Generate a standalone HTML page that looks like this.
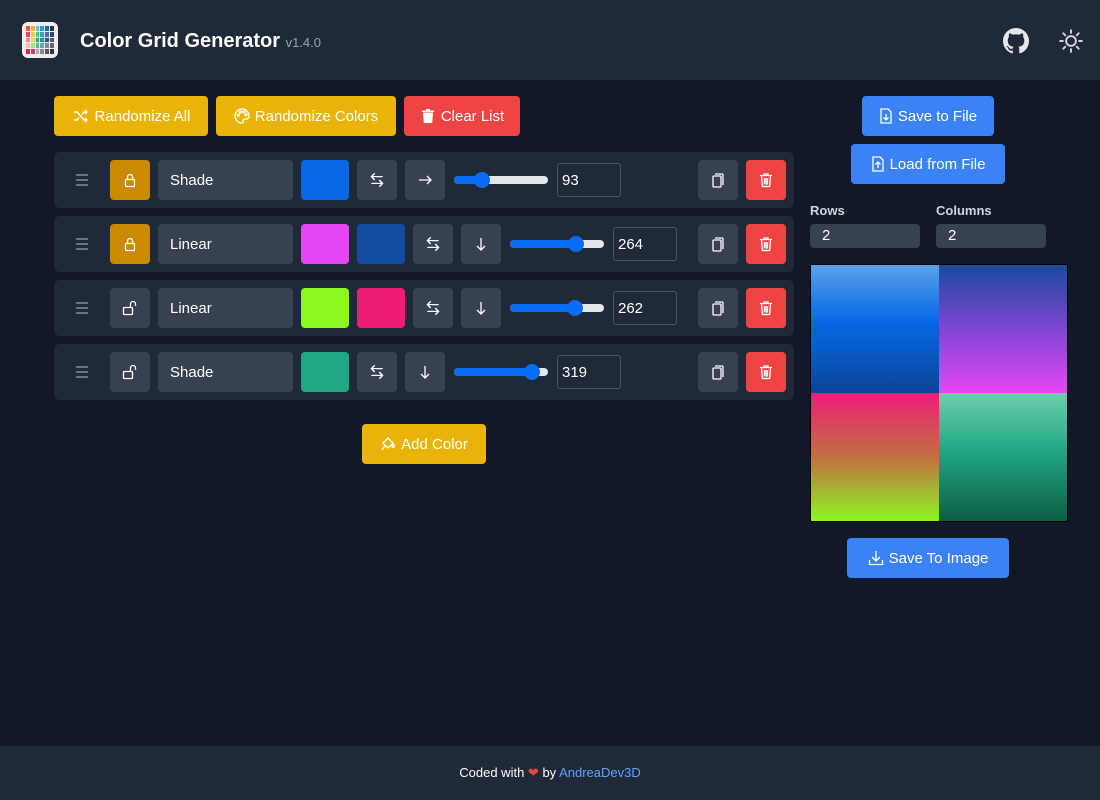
<!DOCTYPE html>
<html><head><meta charset="utf-8"><style>
*{box-sizing:border-box;margin:0;padding:0}
body{width:1100px;height:800px;background:#111827;font-family:"Liberation Sans",sans-serif;color:#fff;position:relative;overflow:hidden}
.a{position:absolute}
.hdr{left:0;top:0;width:1100px;height:80px;background:#1f2937}
.btn{position:absolute;border-radius:4px;display:flex;align-items:center;justify-content:center;font-size:15px;color:#fff;gap:5px}
.y{background:#eab308}.r{background:#ef4444}.b{background:#3b82f6}.g{background:#374151}
.row{position:absolute;left:54px;width:740px;height:56px;background:#1f2937;border-radius:6px}
.sq{position:absolute;top:8px;width:40px;height:40px;border-radius:4px;display:flex;align-items:center;justify-content:center;font-size:18px}
.txt{position:absolute;top:8px;left:104px;width:135px;height:40px;background:#374151;border-radius:4px;font-size:15px;padding-left:12px;line-height:42px}
.num{position:absolute;top:11px;width:64px;height:34px;border:1px solid #4b5563;border-radius:3px;font-size:15px;padding-left:4px;line-height:34px}
.sl{position:absolute;top:24px;width:94px;height:8px;background:#e5e7eb;border-radius:4px}
.sl i{position:absolute;left:0;top:0;height:8px;background:#0a6cf5;border-radius:4px}
.sl b{position:absolute;top:-4px;width:16px;height:16px;border-radius:50%;background:#0a6cf5}
.drag{position:absolute;left:22px;top:22px;width:12px}
.drag s{display:block;height:2px;background:#6b7280;margin-bottom:3px}
.inp{position:absolute;height:24px;background:#374151;border-radius:4px;font-size:15px;padding-left:12px;line-height:24px;width:110px}
svg{display:block}
</style></head><body>
<svg width="0" height="0" style="position:absolute"><defs>
<g id="lock" fill="none" stroke="#fff" stroke-width="1.3"><rect x="3.5" y="7.5" width="9" height="7" rx="1"/><path d="M5.5 7.5V5a2.5 2.5 0 0 1 5 0v2.5"/></g>
<g id="unlock" fill="none" stroke="#fff" stroke-width="1.3"><rect x="1.5" y="7.5" width="9" height="7" rx="1"/><path d="M8.5 7.5V4a2.5 2.5 0 0 1 5 0v2"/></g>
<g id="trash" fill="none" stroke="#fff" stroke-width="1.3"><path d="M2 3.5h12M6 3.5V2h4v1.5M3.5 3.5l.8 11h7.4l.8-11M6.5 6v6.5M9.5 6v6.5M8 6v6.5"/></g>
<g id="copy" fill="none" stroke="#fff" stroke-width="1.3"><rect x="3" y="4" width="8" height="11" rx="1"/><path d="M5 2h7a1 1 0 0 1 1 1v10"/></g>
<g id="swap" fill="none" stroke="#fff" stroke-width="1.2"><path d="M13 5H3M6 2L3 5l3 3M3 11h10M10 8l3 3-3 3"/></g>
<g id="right" fill="none" stroke="#fff" stroke-width="1.3"><path d="M2 8h12M10 4l4 4-4 4"/></g>
<g id="down" fill="none" stroke="#fff" stroke-width="1.3"><path d="M8 2v12M4 10l4 4 4-4"/></g>
</defs></svg>
<div class="a hdr"></div>
<div class="a" style="left:22px;top:22px;width:36px;height:36px;border-radius:6px;background:#eee;padding:4px;display:grid;grid-template-columns:repeat(6,1fr);gap:1px">
<i style="background:#e53"></i><i style="background:#fa3"></i><i style="background:#4cd"></i><i style="background:#39c"></i><i style="background:#26a"></i><i style="background:#235"></i>
<i style="background:#e45"></i><i style="background:#fc3"></i><i style="background:#3c9"></i><i style="background:#2ab"></i><i style="background:#37b"></i><i style="background:#346"></i>
<i style="background:#f87"></i><i style="background:#dd5"></i><i style="background:#2a6"></i><i style="background:#199"></i><i style="background:#448"></i><i style="background:#556"></i>
<i style="background:#fbb"></i><i style="background:#ad8"></i><i style="background:#5b8"></i><i style="background:#6aa"></i><i style="background:#889"></i><i style="background:#667"></i>
<i style="background:#e24"></i><i style="background:#d36"></i><i style="background:#aab"></i><i style="background:#889"></i><i style="background:#556"></i><i style="background:#334"></i>
</div>
<div class="a" style="left:80px;top:30px;font-size:20px;font-weight:bold">Color Grid Generator <span style="font-size:13px;font-weight:normal;color:#9ca3af">v1.4.0</span></div>
<svg class="a" style="left:1003px;top:28px" width="26" height="26" viewBox="0 0 16 16"><path fill="#e5e7eb" d="M8 0C3.58 0 0 3.58 0 8c0 3.54 2.29 6.53 5.47 7.590.4.07.55-.17.55-.38v-1.33c-2.230.48-2.7-1.07-2.7-1.07-.36-.92-.89-1.170-.89-1.17-.73-.5.06-.49.06-.49.8.06 1.230.83 1.230.83.72 1.22 1.870.87 2.330.66.07-.52.28-.87.51-1.07-1.780-.2-3.640-.89-3.640-3.95 0-.87.31-1.59.82-2.15-.08-.2-.36-1.020.08-2.12 0 0 .67-.21 2.200.82a7.6 7.6 0 0 1 4 0c1.530-1.040 2.200-.82 2.200-.82.44 1.100.16 1.920.08 2.120.51.56.82 1.270.82 2.150 0 3.070-1.870 3.750-3.650 3.950.29.25.54.73.54 1.480v2.200c0 .21.15.46.55.38A8 8 0 0 0 16 8c0-4.420-3.580-8-8-8z"/></svg>
<svg class="a" style="left:1058px;top:28px" width="26" height="26" viewBox="0 0 24 24" fill="none" stroke="#d1d5db" stroke-width="1.8" stroke-linecap="round"><circle cx="12" cy="12" r="4.5"/><path d="M12 2v2.5M12 19.5V22M2 12h2.5M19.5 12H22M4.9 4.9l1.8 1.8M17.3 17.3l1.8 1.8M4.9 19.1l1.8-1.8M17.3 6.7l1.8-1.8"/></svg>

<div class="btn y" style="left:54px;top:96px;width:154px;height:40px"><svg width="18" height="16" viewBox="0 0 16 16" fill="none" stroke="#fff" stroke-width="1.4"><path d="M1 4h3l7 8h3M1 12h3l2-2.3M9 6.3L11 4h3M12 2l2 2-2 2M12 10l2 2-2 2"/></svg>Randomize All</div>
<div class="btn y" style="left:216px;top:96px;width:180px;height:40px"><svg width="16" height="16" viewBox="0 0 16 16" fill="none" stroke="#fff" stroke-width="1.3"><path d="M8 1a7 7 0 1 0 0 14c1 0 1.5-.8 1-1.8-.5-1 0-2 1.2-2H12a3 3 0 0 0 3-3A7 7 0 0 0 8 1z"/><circle cx="4.5" cy="7" r="1"/><circle cx="6.5" cy="4" r="1"/><circle cx="10" cy="4" r="1"/><circle cx="12" cy="7" r="1"/></svg>Randomize Colors</div>
<div class="btn r" style="left:404px;top:96px;width:116px;height:40px"><svg width="16" height="16" viewBox="0 0 16 16" fill="#fff"><path d="M2 2.5h12v1.5H2zM6 1h4v1.5H6zM3 4.5h10l-.8 10.5H3.8z"/></svg>Clear List</div>

<div class="row" style="top:152px">
<div class="drag"><s></s><s></s><s></s></div>
<div class="sq" style="left:56px;background:#ca8a04"><svg width="16" height="16" viewBox="0 0 16 16"><use href="#lock"/></svg></div>
<div class="txt">Shade</div>
<div class="sq" style="left:247px;width:48px;background:#0769e6"></div>
<div class="sq g" style="left:303px"><svg width="18" height="18" viewBox="0 0 16 16"><use href="#swap"/></svg></div>
<div class="sq g" style="left:351px"><svg width="16" height="16" viewBox="0 0 16 16"><use href="#right"/></svg></div>
<div class="sl" style="left:400px"><i style="width:28px"></i><b style="left:20px"></b></div>
<div class="num" style="left:503px">93</div>
<div class="sq g" style="left:644px"><svg width="16" height="16" viewBox="0 0 16 16"><use href="#copy"/></svg></div>
<div class="sq r" style="left:692px"><svg width="16" height="16" viewBox="0 0 16 16"><use href="#trash"/></svg></div>
</div>
<div class="row" style="top:216px">
<div class="drag"><s></s><s></s><s></s></div>
<div class="sq" style="left:56px;background:#ca8a04"><svg width="16" height="16" viewBox="0 0 16 16"><use href="#lock"/></svg></div>
<div class="txt">Linear</div>
<div class="sq" style="left:247px;width:48px;background:#e545f5"></div>
<div class="sq" style="left:303px;width:48px;background:#134b9f"></div>
<div class="sq g" style="left:359px"><svg width="18" height="18" viewBox="0 0 16 16"><use href="#swap"/></svg></div>
<div class="sq g" style="left:407px"><svg width="16" height="16" viewBox="0 0 16 16"><use href="#down"/></svg></div>
<div class="sl" style="left:456px"><i style="width:66px"></i><b style="left:58px"></b></div>
<div class="num" style="left:559px">264</div>
<div class="sq g" style="left:644px"><svg width="16" height="16" viewBox="0 0 16 16"><use href="#copy"/></svg></div>
<div class="sq r" style="left:692px"><svg width="16" height="16" viewBox="0 0 16 16"><use href="#trash"/></svg></div>
</div>
<div class="row" style="top:280px">
<div class="drag"><s></s><s></s><s></s></div>
<div class="sq g" style="left:56px"><svg width="16" height="16" viewBox="0 0 16 16"><use href="#unlock"/></svg></div>
<div class="txt">Linear</div>
<div class="sq" style="left:247px;width:48px;background:#8ef722"></div>
<div class="sq" style="left:303px;width:48px;background:#ed1d75"></div>
<div class="sq g" style="left:359px"><svg width="18" height="18" viewBox="0 0 16 16"><use href="#swap"/></svg></div>
<div class="sq g" style="left:407px"><svg width="16" height="16" viewBox="0 0 16 16"><use href="#down"/></svg></div>
<div class="sl" style="left:456px"><i style="width:66px"></i><b style="left:57px"></b></div>
<div class="num" style="left:559px">262</div>
<div class="sq g" style="left:644px"><svg width="16" height="16" viewBox="0 0 16 16"><use href="#copy"/></svg></div>
<div class="sq r" style="left:692px"><svg width="16" height="16" viewBox="0 0 16 16"><use href="#trash"/></svg></div>
</div>
<div class="row" style="top:344px">
<div class="drag"><s></s><s></s><s></s></div>
<div class="sq g" style="left:56px"><svg width="16" height="16" viewBox="0 0 16 16"><use href="#unlock"/></svg></div>
<div class="txt">Shade</div>
<div class="sq" style="left:247px;width:48px;background:#1fa882"></div>
<div class="sq g" style="left:303px"><svg width="18" height="18" viewBox="0 0 16 16"><use href="#swap"/></svg></div>
<div class="sq g" style="left:351px"><svg width="16" height="16" viewBox="0 0 16 16"><use href="#down"/></svg></div>
<div class="sl" style="left:400px"><i style="width:84px"></i><b style="left:70px"></b></div>
<div class="num" style="left:503px">319</div>
<div class="sq g" style="left:644px"><svg width="16" height="16" viewBox="0 0 16 16"><use href="#copy"/></svg></div>
<div class="sq r" style="left:692px"><svg width="16" height="16" viewBox="0 0 16 16"><use href="#trash"/></svg></div>
</div>

<div class="btn y" style="left:362px;top:424px;width:124px;height:40px"><svg width="16" height="16" viewBox="0 0 16 16" fill="none" stroke="#fff" stroke-width="1.3"><path d="M3 7l5-5 5 5-5 5zM13 7l1.5 3a1.3 1.3 0 1 1-2.6 0z M5 9.5L2 14"/></svg>Add Color</div>

<div class="btn b" style="left:862px;top:96px;width:132px;height:40px"><svg width="14" height="16" viewBox="0 0 14 16" fill="none" stroke="#fff" stroke-width="1.3"><path d="M2 1h7l3 3v11H2zM7 6v6M4.5 9.5L7 12l2.5-2.5"/></svg>Save to File</div>
<div class="btn b" style="left:851px;top:144px;width:154px;height:40px"><svg width="14" height="16" viewBox="0 0 14 16" fill="none" stroke="#fff" stroke-width="1.3"><path d="M2 1h7l3 3v11H2zM7 12V6M4.5 8.5L7 6l2.5 2.5"/></svg>Load from File</div>
<div class="a" style="left:810px;top:203px;font-size:13px;font-weight:bold;color:#d1d5db">Rows</div>
<div class="a" style="left:936px;top:203px;font-size:13px;font-weight:bold;color:#d1d5db">Columns</div>
<div class="inp" style="left:810px;top:224px">2</div>
<div class="inp" style="left:936px;top:224px">2</div>
<div class="a" style="left:810px;top:264px;width:258px;height:258px;border:1px solid #000;display:grid;grid-template-columns:1fr 1fr">
<div style="background:linear-gradient(#5aa2ec,#0468e4 45%,#0b4597)"></div>
<div style="background:linear-gradient(#1c4a9e,#8a45d8 55%,#e646f6)"></div>
<div style="background:linear-gradient(#ee1f78,#c0703f 50%,#8ef622)"></div>
<div style="background:linear-gradient(#6fcdb0,#20a882 45%,#0e5d47)"></div>
</div>
<div class="btn b" style="left:847px;top:538px;width:162px;height:40px"><svg width="16" height="16" viewBox="0 0 16 16" fill="none" stroke="#fff" stroke-width="1.3"><path d="M8 1v10M4 7l4 4 4-4M1.5 10v4.5h13V10"/></svg>Save To Image</div>

<div class="a" style="left:0;top:746px;width:1100px;height:54px;background:#1f2937;text-align:center;line-height:54px;font-size:13px">Coded with <span style="color:#ef4444">❤</span> by <span style="color:#60a5fa">AndreaDev3D</span></div>
</body></html>
